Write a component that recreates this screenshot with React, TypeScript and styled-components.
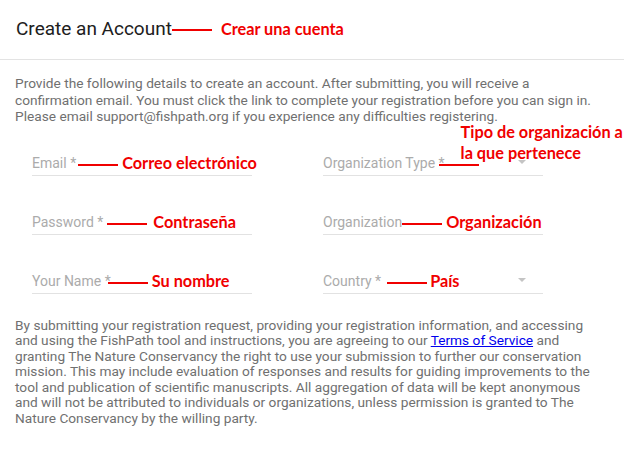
import React from "react";
import styled, { createGlobalStyle } from "styled-components";

const GlobalStyle = createGlobalStyle`
  html, body {
    margin: 0;
    padding: 0;
    background: #ffffff;
  }
  body {
    font-family: Roboto, "Liberation Sans", sans-serif;
    -webkit-font-smoothing: antialiased;
  }
`;

const Page = styled.div`
  width: 624px;
  height: 459px;
  overflow: hidden;
  background: #ffffff;
`;

const Header = styled.div`
  display: flex;
  align-items: center;
  padding: 17px 15px 18px 15px;
  border-bottom: 1px solid #e3e3e3;
`;

const Title = styled.h1`
  margin: 0 0 0 1px;
  font-size: 19px;
  line-height: 24px;
  font-weight: 400;
  color: #202020;
`;

const Body = styled.div`
  padding: 0 15px;
`;

const Intro = styled.p`
  margin: 15px 0 0 0;
  font-size: 13.7px;
  line-height: 16.5px;
  color: #707070;
  white-space: nowrap;
`;

const FormGrid = styled.div`
  display: grid;
  grid-template-columns: 220px 220px;
  column-gap: 71px;
  row-gap: 36px;
  margin: 28px 0 0 17px;
`;

const Field = styled.div`
  position: relative;
  display: flex;
  align-items: center;
  height: 20px;
  padding-bottom: 2px;
  border-bottom: 1px solid #e2e2e2;
`;

const Placeholder = styled.span`
  font-size: 14px;
  line-height: 20px;
  color: #ababab;
  white-space: nowrap;
`;

const Arrow = styled.span`
  position: absolute;
  right: 17px;
  top: 7px;
  width: 0;
  height: 0;
  border-left: 4px solid transparent;
  border-right: 4px solid transparent;
  border-top: 4px solid #c4c4c4;
`;

const Connector = styled.span<{ $gap: number; $drop?: number }>`
  position: relative;
  flex: none;
  width: 40px;
  height: 2px;
  margin-left: ${(p) => p.$gap}px;
  margin-top: ${(p) => p.$drop ?? 5}px;
  background: #f00000;
`;

const Note = styled.span<{ $gap?: number }>`
  margin-left: ${(p) => p.$gap ?? 6}px;
  font-family: Lato, "Open Sans", sans-serif;
  font-weight: 700;
  font-size: 16.3px;
  line-height: 20px;
  color: #f00000;
  white-space: nowrap;
`;

const FloatingNote = styled(Note)`
  position: absolute;
  left: 22px;
  bottom: 3px;
  margin-left: 0;
  line-height: 21px;
`;

const Terms = styled.p`
  margin: 24px 0 0 0;
  font-size: 13.7px;
  line-height: 15.5px;
  color: #707070;
  white-space: nowrap;
`;

const TermsLink = styled.a`
  color: #0000ee;
  text-decoration: underline;
`;

type FieldProps = {
  label: string;
  note: string;
  gap: number;
  noteGap?: number;
  select?: boolean;
};

const FormField = ({ label, note, gap, noteGap, select }: FieldProps) => (
  <Field>
    <Placeholder>{label}</Placeholder>
    <Connector $gap={gap} />
    <Note $gap={noteGap}>{note}</Note>
    {select && <Arrow />}
  </Field>
);

const App = () => {
  return (
    <Page>
      <GlobalStyle />
      <Header>
        <Title>Create an Account</Title>
        <Connector $gap={0} $drop={2} />
        <Note $gap={9}>Crear una cuenta</Note>
      </Header>
      <Body>
        <Intro>
          Provide the following details to create an account. After submitting, you will receive a
          <br />
          confirmation email. You must click the link to complete your registration before you can sign in.
          <br />
          Please email support@fishpath.org if you experience any difficulties registering.
        </Intro>
        <FormGrid>
          <FormField label="Email *" note="Correo electrónico" gap={2} noteGap={4} />
          <Field>
            <Placeholder>Organization Type *</Placeholder>
            <Connector $gap={-6}>
              <FloatingNote>
                Tipo de organización a
                <br />
                la que pertenece
              </FloatingNote>
            </Connector>
            <Arrow />
          </Field>
          <FormField label="Password *" note="Contraseña" gap={4} noteGap={6} />
          <FormField label="Organization" note="Organización" gap={0} noteGap={4} />
          <FormField label="Your Name *" note="Su nombre" gap={-3} noteGap={4} />
          <FormField label="Country *" note="País" gap={6} noteGap={3} select />
        </FormGrid>
        <Terms>
          By submitting your registration request, providing your registration information, and accessing
          <br />
          and using the FishPath tool and instructions, you are agreeing to our{" "}
          <TermsLink href="#">Terms of Service</TermsLink> and
          <br />
          granting The Nature Conservancy the right to use your submission to further our conservation
          <br />
          mission. This may include evaluation of responses and results for guiding improvements to the
          <br />
          tool and publication of scientific manuscripts. All aggregation of data will be kept anonymous
          <br />
          and will not be attributed to individuals or organizations, unless permission is granted to The
          <br />
          Nature Conservancy by the willing party.
        </Terms>
      </Body>
    </Page>
  );
};

export default App;
